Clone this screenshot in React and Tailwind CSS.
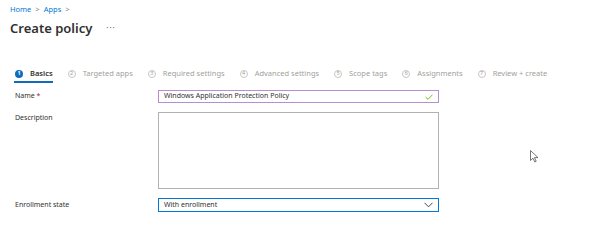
import React from "react";

const steps = [
  { n: 1, label: "Basics" },
  { n: 2, label: "Targeted apps" },
  { n: 3, label: "Required settings" },
  { n: 4, label: "Advanced settings" },
  { n: 5, label: "Scope tags" },
  { n: 6, label: "Assignments" },
  { n: 7, label: "Review + create" },
];

function Step({ n, label, active }) {
  return (
    <div className="relative flex items-center h-[20px]">
      {active ? (
        <span className="w-[8px] h-[8px] rounded-full bg-[#0f6cbd] text-white text-[5.5px] font-bold flex items-center justify-center leading-none">
          {n}
        </span>
      ) : (
        <span className="w-[8px] h-[8px] rounded-full border border-[#c8c6c4] text-[#a19f9d] text-[5.5px] flex items-center justify-center leading-none">
          {n}
        </span>
      )}
      <span className={"ml-[7px] text-[7.5px] " + (active ? "text-[#323130] font-semibold" : "text-[#a19f9d]")}>
        {label}
      </span>
      {active && <span className="absolute left-[-1px] right-0 bottom-[1px] h-[2px] bg-[#0f6cbd]" />}
    </div>
  );
}

export default function App() {
  return (
    <div
      className="relative w-[602px] h-[245px] bg-white overflow-hidden"
      style={{ fontFamily: '"Segoe UI", "Noto Sans", "Open Sans", sans-serif' }}
    >
      <div className="pl-[10px] pt-[3px] text-[7.5px] text-[#0078d4] leading-[12px] flex items-center gap-[4px]">
        <span>Home</span>
        <span className="text-[#8a8886]">&gt;</span>
        <span>Apps</span>
        <span className="text-[#8a8886]">&gt;</span>
      </div>
      <div className="pl-[10px] mt-[3px] flex items-center">
        <span className="text-[13px] font-semibold text-[#323130] leading-[20px]">Create policy</span>
        <span className="ml-[14px] text-[8px] text-[#605e5c] tracking-[1px]">···</span>
      </div>
      <div className="pl-[15px] mt-[26px] flex items-center gap-[15px]">
        {steps.map((s) => (
          <Step key={s.n} n={s.n} label={s.label} active={s.n === 1} />
        ))}
      </div>
      <div className="pl-[15px] mt-[6px] text-[7px] text-[#323130]">
        <div className="flex items-center h-[13px]">
          <div className="w-[143px]">
            Name <span className="text-[#a4262c]">*</span>
          </div>
          <div className="w-[281px] h-[13px] border border-[#b68fd0] flex items-center justify-between px-[5px]">
            <span>Windows Application Protection Policy</span>
            <svg width="8" height="6" viewBox="0 0 8 6" fill="none">
              <path d="M0.5 3 L3 5.3 L7.5 0.7" stroke="#6bb700" strokeWidth="0.9" />
            </svg>
          </div>
        </div>
        <div className="flex mt-[9px]">
          <div className="w-[143px] pt-[1px]">Description</div>
          <div className="w-[281px] h-[77px] border border-[#b3b0ad]" />
        </div>
        <div className="flex items-center mt-[9px] h-[14px]">
          <div className="w-[143px]">Enrollment state</div>
          <div className="w-[281px] h-[14px] border border-[#0078d4] flex items-center justify-between px-[5px]">
            <span>With enrollment</span>
            <svg width="9" height="6" viewBox="0 0 9 6" fill="none">
              <path d="M0.5 0.8 L4.5 4.8 L8.5 0.8" stroke="#323130" strokeWidth="0.9" />
            </svg>
          </div>
        </div>
      </div>
      <svg className="absolute left-[530px] top-[150px]" width="9" height="13" viewBox="0 0 9 13">
        <path d="M0.5 0.5 L0.5 10.5 L3 8.2 L4.8 12 L6.2 11.3 L4.5 7.6 L8 7.6 Z" fill="white" stroke="#555" strokeWidth="0.8" strokeLinejoin="round" />
      </svg>
    </div>
  );
}
